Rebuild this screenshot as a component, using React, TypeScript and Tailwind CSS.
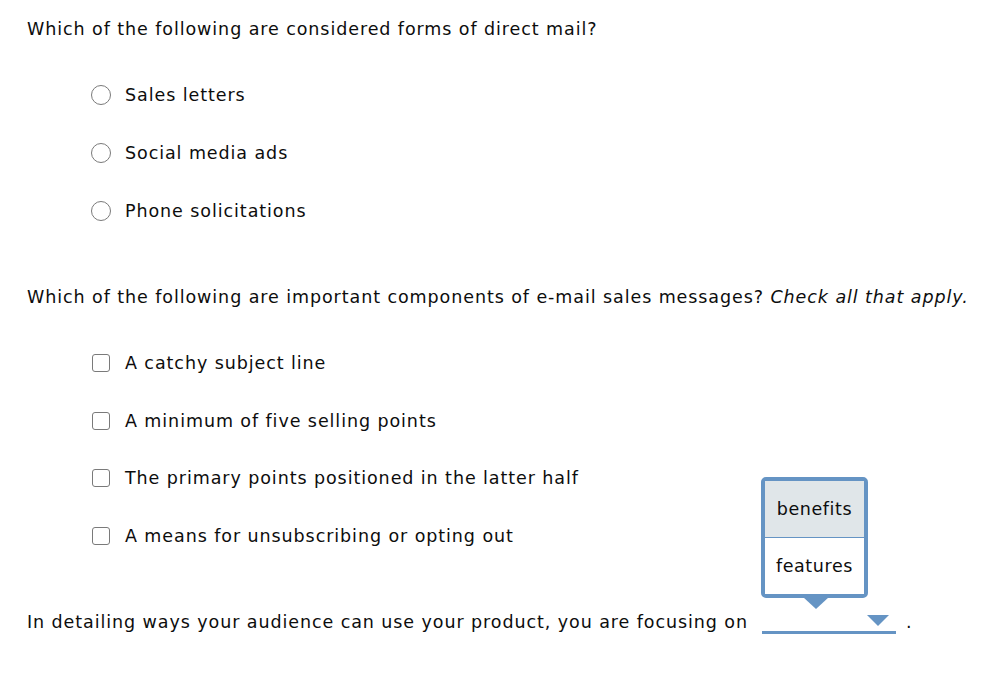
import React from 'react';

const radioOptions = ['Sales letters', 'Social media ads', 'Phone solicitations'];

const checkOptions = [
  'A catchy subject line',
  'A minimum of five selling points',
  'The primary points positioned in the latter half',
  'A means for unsubscribing or opting out',
];

const Radio = () => (
  <span className="w-[20px] h-[20px] rounded-full border-[1.5px] border-[#7a7a7a] bg-white shrink-0" />
);

const Checkbox = () => (
  <span className="w-[18px] h-[18px] rounded-[3px] border-[1.5px] border-[#7a7a7a] bg-white shrink-0" />
);

const Dropdown = () => (
  <span className="relative inline-flex align-bottom w-[134px] h-[26px] border-b-[3px] border-[#6594c4] ml-[14px]">
    {/* open list */}
    <div className="absolute left-[-1px] bottom-[33px] w-[107px] border-[4px] border-[#6594c4] rounded-[5px] bg-white flex flex-col tracking-[0.6px]">
      <div className="h-[57px] flex items-center justify-center bg-[#e0e6e9] border-b border-[#6594c4]">benefits</div>
      <div className="h-[56px] flex items-center justify-center bg-white">features</div>
      <svg className="absolute left-[38px] bottom-[-15px]" width="26" height="12" viewBox="0 0 26 12">
        <polygon points="0,0 26,0 13,12" fill="#6594c4" />
      </svg>
    </div>
    <svg className="absolute right-[7px] top-[7px]" width="22" height="11" viewBox="0 0 22 11">
      <polygon points="0,0 22,0 11,11" fill="#6594c4" />
    </svg>
  </span>
);

export default function App() {
  return (
    <div
      className="w-[1008px] h-[674px] bg-white text-[#0d0d0d] text-[17.5px] tracking-[0.92px] leading-[24px] pl-[27px] pt-[17px]"
      style={{ fontFamily: '"DejaVu Sans", Verdana, sans-serif' }}
    >
      <p>Which of the following are considered forms of direct mail?</p>

      <div className="mt-[25px] ml-[64px] flex flex-col">
        {radioOptions.map((o) => (
          <label key={o} className="h-[58px] flex items-center gap-[14px]">
            <Radio />
            <span>{o}</span>
          </label>
        ))}
      </div>

      <p className="mt-[45px]">
        Which of the following are important components of e-mail sales messages? <i>Check all that apply.</i>
      </p>

      <div className="mt-[25px] ml-[65px] flex flex-col">
        {checkOptions.map((o) => (
          <label key={o} className="h-[57.7px] flex items-center gap-[15px]">
            <Checkbox />
            <span>{o}</span>
          </label>
        ))}
      </div>

      <p className="mt-[43px] flex items-end">
        <span>In detailing ways your audience can use your product, you are focusing on</span>
        <Dropdown />
        <span className="ml-[10px]">.</span>
      </p>
    </div>
  );
}
